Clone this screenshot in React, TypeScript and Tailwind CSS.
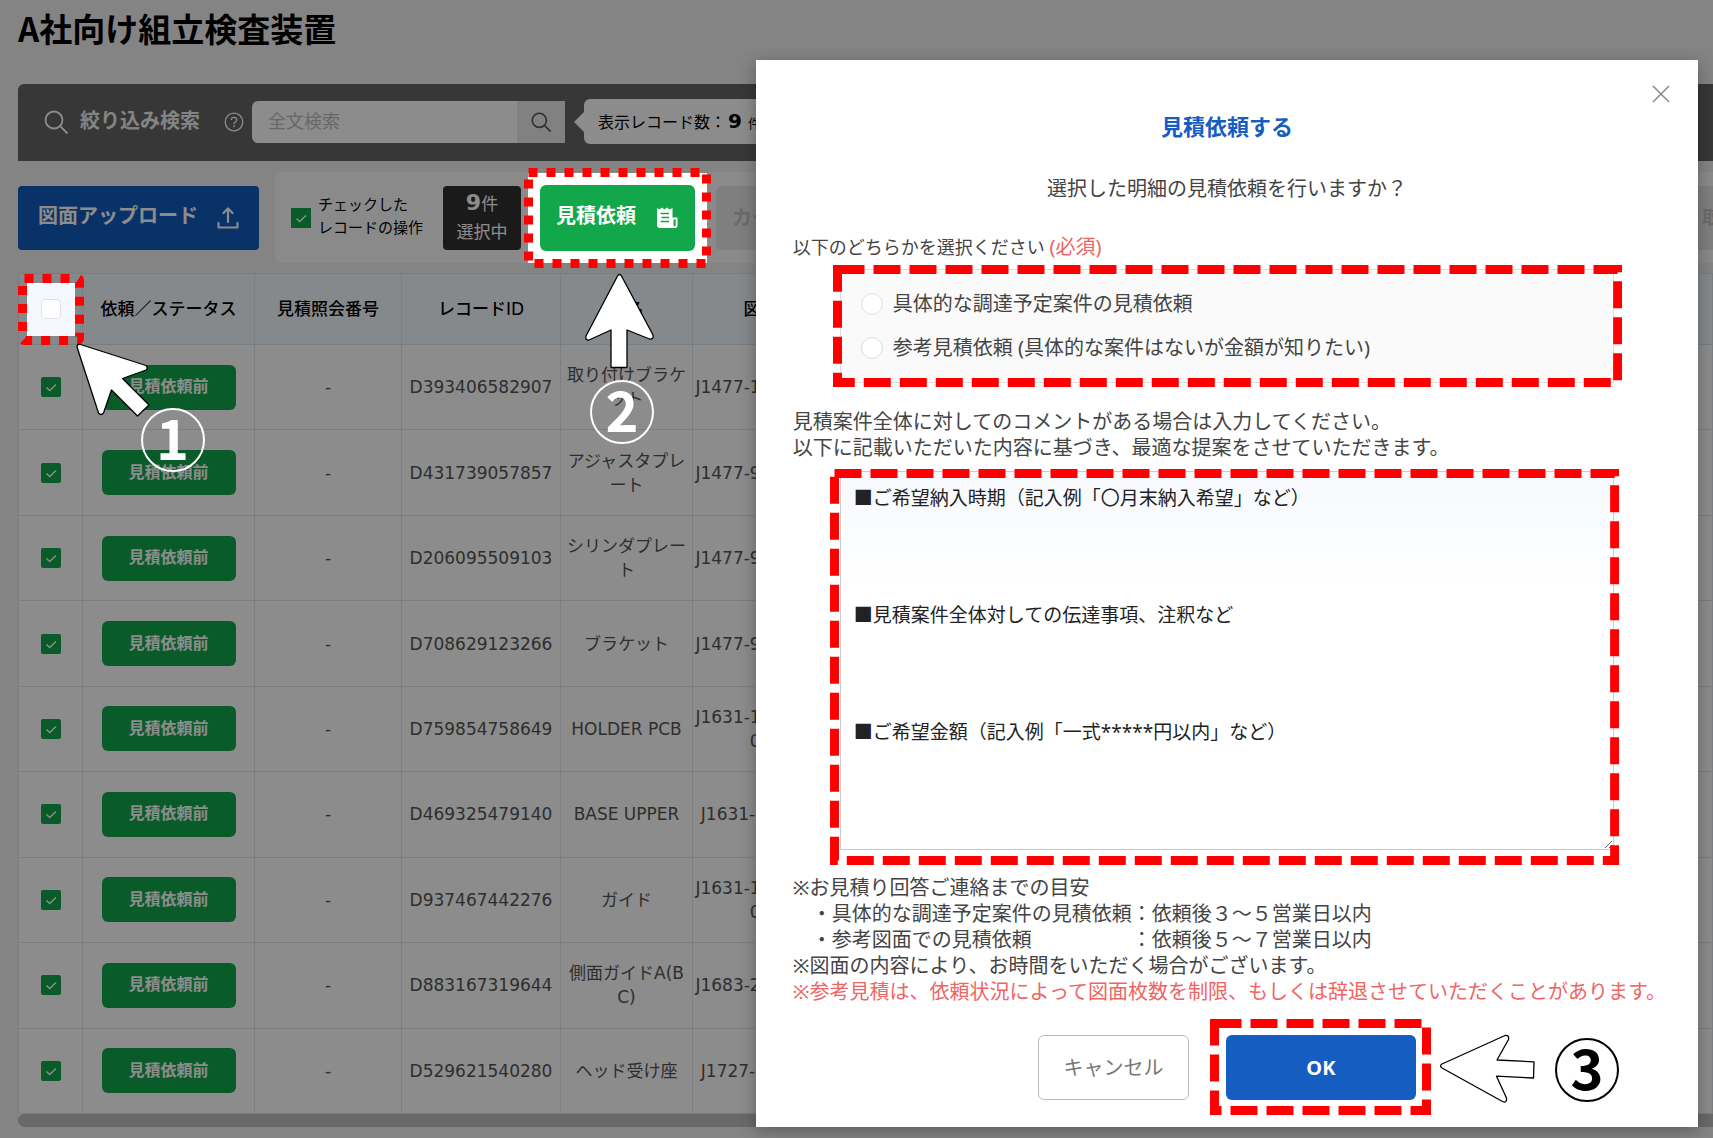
import type { ReactNode } from 'react';
import clsx from 'clsx';

type RecordRow = {
  id: string;
  name: string;
  drawing: string[];
};

const records: RecordRow[] = [
  { id: 'D393406582907', name: '取り付けブラケット', drawing: ['J1477-1002001'] },
  { id: 'D431739057857', name: 'アジャスタプレート', drawing: ['J1477-9001001'] },
  { id: 'D206095509103', name: 'シリンダプレート', drawing: ['J1477-9002001'] },
  { id: 'D708629123266', name: 'ブラケット', drawing: ['J1477-9003001'] },
  { id: 'D759854758649', name: 'HOLDER PCB', drawing: ['J1631-1001001', '01'] },
  { id: 'D469325479140', name: 'BASE UPPER', drawing: ['J1631-100100'] },
  { id: 'D937467442276', name: 'ガイド', drawing: ['J1631-1002001', '01'] },
  { id: 'D883167319644', name: '側面ガイドA(BC)', drawing: ['J1683-2001001'] },
  { id: 'D529621540280', name: 'ヘッド受け座', drawing: ['J1727-100100'] },
];

const defaultComment = [
  '■ご希望納入時期（記入例「〇月末納入希望」など）',
  '',
  '',
  '■見積案件全体対しての伝達事項、注釈など',
  '',
  '',
  '■ご希望金額（記入例「一式*****円以内」など）',
].join('\n');

function SearchIcon({ className, strokeWidth = 2 }: { className?: string; strokeWidth?: number }) {
  return (
    <svg className={className} viewBox="0 0 24 24" fill="none" stroke="currentColor" strokeWidth={strokeWidth} strokeLinecap="round">
      <circle cx="10" cy="10" r="8.5" />
      <path d="M16.2 16.2L23 23" />
    </svg>
  );
}

function UploadIcon() {
  return (
    <svg className="w-[22px] h-[22px]" viewBox="0 0 22 22" fill="none" stroke="currentColor" strokeWidth={2.2} strokeLinecap="round" strokeLinejoin="round">
      <path d="M11 15V2M6.500 6L11 1.500L15.500 6" />
      <path d="M1.500 16V20.500H20.500V16" />
    </svg>
  );
}

function EstimateIcon() {
  return (
    <svg className="w-[22px] h-[22px]" viewBox="0 0 22 22" fill="none">
      <path d="M1 1L3.500 2.500L6 0.500L8.500 2.500L11 0.500L13.500 2.500L16.500 1V10.500H21.500V18.500Q21.500 21 19 21H4Q1 21 1 18Z" fill="white" />
      <path d="M4.500 6.500H13M5.500 10.500H13M4.500 14.500H13" stroke="#12a74b" strokeWidth={1.7} />
      <path d="M17.500 12.500H19.700V18Q19.700 19.300 18.600 19.300Q17.500 19.300 17.500 18Z" fill="#12a74b" />
    </svg>
  );
}

function TickBox({ label, rounded }: { label: string; rounded?: boolean }) {
  return (
    <span className="relative inline-flex w-5 h-5 shrink-0">
      <input
        type="checkbox"
        defaultChecked
        aria-label={label}
        className={clsx('appearance-none w-5 h-5 bg-[#12a74b]', rounded && 'rounded-xs')}
      />
      <svg className="absolute inset-0 w-5 h-5 pointer-events-none" viewBox="0 0 20 20" fill="none" stroke="white" strokeWidth={1.5}>
        <path d="M5.5 10.5L8.7 13.5L15 7.5" />
      </svg>
    </span>
  );
}

// Red dashed frame. The parent decides how far it reaches beyond its target.
function DashedFrame({ className, dash, radius = 0 }: { className: string; dash: string; radius?: number }) {
  return (
    <div className={clsx('absolute pointer-events-none', className)}>
      <svg className="block w-full h-full" fill="none">
        <rect
          x="4.5"
          y="4.5"
          rx={radius}
          className="w-[calc(100%-9px)] h-[calc(100%-9px)]"
          stroke="#ff0000"
          strokeWidth={9}
          strokeDasharray={dash}
        />
      </svg>
    </div>
  );
}

function StepNumber({ className, children }: { className: string; children: ReactNode }) {
  return (
    <span
      className={clsx(
        'absolute flex items-center justify-center w-16 h-16 pb-2 rounded-full border-2 text-[56px] leading-none font-bold font-["Noto_Sans_CJK_JP",sans-serif] pointer-events-none',
        className,
      )}
    >
      {children}
    </span>
  );
}

function Arrow({ className, viewBox, d }: { className: string; viewBox: string; d: string }) {
  return (
    <svg className={clsx('absolute pointer-events-none', className)} viewBox={viewBox} fill="white" stroke="black" strokeWidth={1.3} strokeLinejoin="round">
      <path d={d} />
    </svg>
  );
}

function SearchBar() {
  return (
    <div className="flex items-center h-[77px] pl-[26px] pb-[2px] bg-[#646464] rounded-tl-md text-white">
      <SearchIcon className="w-6 h-6" strokeWidth={1.8} />
      <span className="ml-3 pb-[2px] text-[20px] font-bold text-[#f0f0f0]">絞り込み検索</span>
      <svg className="ml-6 w-5 h-5" viewBox="0 0 20 20" fill="none" stroke="currentColor" strokeWidth={1.3}>
        <circle cx="10" cy="10" r="8.8" />
        <path d="M7.3 8Q7.3 5.3 10 5.3Q12.7 5.3 12.7 7.7Q12.7 9 11.2 10Q10 10.8 10 12.2" />
        <path d="M10 13.6V15" strokeWidth={1.6} />
      </svg>
      <div className="ml-2 flex h-[42px]">
        <input
          type="text"
          aria-label="全文検索"
          placeholder="全文検索"
          className="w-[265px] pl-4 text-[18px] bg-white rounded-l-md placeholder:text-[#bdbdbd]"
        />
        <button type="button" aria-label="検索" className="flex items-center justify-center w-12 bg-[#ebebeb] text-[#5a5a5a]">
          <SearchIcon className="w-5 h-5" strokeWidth={2} />
        </button>
      </div>
      <svg className="ml-[9px] w-[10px] h-6" viewBox="0 0 10 24" fill="white">
        <path d="M0 12L10 2V22Z" />
      </svg>
      <div className="flex items-baseline h-[45px] w-60 pl-[14px] bg-white rounded-md text-[16px] leading-[45px] text-black">
        表示レコード数：
        <span className="ml-[2px] text-[20px] font-bold font-['DejaVu_Sans',sans-serif]">9</span>
        <span className="ml-[6px] text-[13px]">件</span>
      </div>
    </div>
  );
}

function Toolbar() {
  return (
    <div className="flex items-center gap-4 mt-[11px]">
      <button type="button" className="flex items-center justify-between w-[241px] h-16 shrink-0 px-5 bg-[#125bbd] rounded-sm text-white text-[20px] font-bold">
        <span className="pb-1">図面アップロード</span>
        <UploadIcon />
      </button>
      <div className="flex flex-1 items-center h-[91px] pl-4 bg-[#fcfcfc] rounded-l-lg">
        <TickBox label="チェックしたレコードの操作" />
        <p className="ml-[7px] w-[106px] pb-[2px] text-[15px] leading-[23px] text-black whitespace-nowrap">
          チェックした
          <br />
          レコードの操作
        </p>
        <div className="flex flex-col items-center justify-center w-[78px] h-16 ml-[19px] bg-[#313131] rounded-sm text-[17px] leading-[28px] text-white">
          <span>
            <b className="text-[22px] font-['DejaVu_Sans',sans-serif]">9</b>件
          </span>
          <span>選択中</span>
        </div>
        <div className="relative z-20 ml-[19px]">
          <div className="absolute -inset-3 bg-white" />
          <DashedFrame className="-inset-x-4 -inset-y-[17px]" dash="9 9" />
          <button type="button" className="relative flex items-center justify-between w-[155px] h-[66px] pl-4 pr-[17px] bg-[#12a74b] rounded-md text-white text-[20px] font-bold">
            <span className="pb-1">見積依頼</span>
            <EstimateIcon />
          </button>
          <Arrow
            className="top-[88px] left-[44px] w-[72px] h-[98px]"
            viewBox="0 0 72 98"
            d="M33.5 3Q35.500 0 37.500 3L69 62Q70 66.500 65.500 66L43 57V94.500H27V57L5 67Q1 67.500 2 63Z"
          />
          <StepNumber className="top-[195px] left-[50px] border-white text-white">2</StepNumber>
        </div>
        <button type="button" disabled className="w-40 h-16 ml-[21px] pl-4 text-left bg-[#e7e7e7] rounded-md text-[20px] font-bold text-[#c4c4c4]">
          カート
        </button>
        <button type="button" disabled className="w-[31px] h-16 ml-auto pl-5 overflow-hidden text-left whitespace-nowrap bg-[#e7e7e7] text-[18px] font-bold text-[#c4c4c4]">
          取消
        </button>
      </div>
    </div>
  );
}

function RecordTable() {
  return (
    <div className="flex-1 min-h-0 mt-[10px]">
      <table className="w-full h-full table-fixed border-collapse bg-white text-center text-[17px] leading-6 text-[#555] [&_td]:border [&_td]:border-[#e2e3e7] [&_th]:border [&_th]:border-[#e2e3e7]">
        <colgroup>
          <col className="w-16" />
          <col className="w-[172px]" />
          <col className="w-[147px]" />
          <col className="w-[159px]" />
          <col className="w-[132px]" />
          <col className="w-[136px]" />
          <col />
        </colgroup>
        <thead>
          <tr className="h-[71px] bg-[#f5f9fd] text-black [&>th]:font-medium">
            <th>
              <div className="relative z-20 flex items-center justify-center w-12 h-[53px] mx-auto bg-[#f5f9fd]">
                <input type="checkbox" aria-label="すべて選択" className="appearance-none w-5 h-5 bg-white border border-[#dfe3e8] rounded-sm" />
                <DashedFrame className="-inset-[9px]" dash="9 9" radius={2} />
                <Arrow
                  className="top-[60px] left-[48px] w-[78px] h-[78px]"
                  viewBox="0 0 78 78"
                  d="M2 4Q2 0.500 5.500 1.500L71 22.500Q73.500 25 71 27L47.500 35.500L74 62L62.500 73L36.500 47L28.500 70Q26 73 23.500 70Z"
                />
                <StepNumber className="top-[125px] left-[114px] border-white text-white">1</StepNumber>
              </div>
            </th>
            <th>依頼／ステータス</th>
            <th>見積照会番号</th>
            <th>レコードID</th>
            <th>品名</th>
            <th>図番</th>
            <th></th>
          </tr>
        </thead>
        <tbody>
          {records.map((record) => (
            <tr key={record.id}>
              <td>
                <div className="flex justify-center">
                  <TickBox label={record.id} rounded />
                </div>
              </td>
              <td className="py-4">
                <button type="button" className="block w-[134px] h-[45px] mx-auto bg-[#12a74b] rounded-md text-[16px] font-bold text-white">
                  見積依頼前
                </button>
              </td>
              <td>-</td>
              <td>{record.id}</td>
              <td className="px-[6px] break-all">{record.name}</td>
              <td className="whitespace-nowrap">
                {record.drawing.map((line) => (
                  <div key={line}>{line}</div>
                ))}
              </td>
              <td></td>
            </tr>
          ))}
        </tbody>
      </table>
    </div>
  );
}

function RadioOption({ label }: { label: string }) {
  return (
    <label className="flex items-center gap-[10px] h-11">
      <input type="radio" name="estimate-type" className="appearance-none w-[22px] h-[22px] bg-white border border-[#dcdcdc] rounded-full checked:border-[6px] checked:border-[#155dc0]" />
      {label}
    </label>
  );
}

function EstimateModal() {
  return (
    <div
      role="dialog"
      aria-labelledby="modal-title"
      className="absolute z-30 top-[60px] right-[15px] w-[55%] px-[37px] pt-[51px] pb-[27px] bg-white text-[20px] leading-[26px] text-[#444] shadow-[0_4px_16px_rgba(0,0,0,0.3)]"
    >
      <button type="button" aria-label="閉じる" className="absolute top-[24px] right-[27px] p-px text-[#888]">
        <svg className="w-[18px] h-[18px]" viewBox="0 0 18 18" stroke="currentColor" strokeWidth={1.5}>
          <path d="M1 1L17 17M17 1L1 17" />
        </svg>
      </button>

      <h2 id="modal-title" className="text-center text-[22px] leading-[30px] font-bold text-[#155dc0]">
        見積依頼する
      </h2>
      <p className="mt-[35px] text-center">選択した明細の見積依頼を行いますか？</p>

      <p className="mt-8 text-[18px]">
        以下のどちらかを選択ください <span className="text-[20px] text-[#f06464]">(必須)</span>
      </p>
      <div className="relative mt-[9px] mx-[47px] pl-5 py-3 bg-[#fafafa] border border-[#ddd]">
        <RadioOption label="具体的な調達予定案件の見積依頼" />
        <RadioOption label="参考見積依頼 (具体的な案件はないが金額が知りたい)" />
        <DashedFrame className="-left-2 -right-[9px] -inset-y-[5px]" dash="27 9" />
      </div>

      <label htmlFor="comment" className="block mt-[26px]">
        見積案件全体に対してのコメントがある場合は入力してください。
        <br />
        以下に記載いただいた内容に基づき、最適な提案をさせていただきます。
      </label>
      <div className="relative mt-[10px] mx-[47px]">
        <textarea
          id="comment"
          defaultValue={defaultComment}
          className="block w-full h-[379px] px-[13px] py-[7px] resize-y overflow-hidden border border-[#ccc] bg-linear-to-b from-[#f6f9fd] to-white to-30% text-[19px] leading-[39px] text-[#222]"
        />
        <DashedFrame className="-left-[10px] -right-[5px] -top-[2px] -bottom-[15px]" dash="27 9" />
      </div>

      <div className="mt-[25px] whitespace-nowrap">
        <p>※お見積り回答ご連絡までの目安</p>
        <p className="pl-[19px]">・具体的な調達予定案件の見積依頼：依頼後３～５営業日以内</p>
        <p className="pl-[19px]">・参考図面での見積依頼　　　　　：依頼後５～７営業日以内</p>
        <p>※図面の内容により、お時間をいただく場合がございます。</p>
        <p className="text-[#f06464]">※参考見積は、依頼状況によって図面枚数を制限、もしくは辞退させていただくことがあります。</p>
      </div>

      <div className="flex justify-center gap-[37px] mt-[30px]">
        <button type="button" className="w-[151px] h-[65px] border border-[#bbb] rounded-md text-[#777]">
          キャンセル
        </button>
        <div className="relative">
          <button type="button" className="w-[190px] h-[65px] bg-[#155dc0] rounded-md font-bold text-white">
            OK
          </button>
          <DashedFrame className="-left-4 -top-4 -right-[15px] -bottom-[15px]" dash="27 9" />
          <Arrow
            className="-top-[2px] left-[213px] w-[98px] h-[72px]"
            viewBox="0 0 98 72"
            d="M3 35Q0 33 3 31L66 2.500Q70.500 2 69.500 6.500L58 27L95 28.800L94.500 45L57.500 43.200L67.500 65Q68 70.500 63.500 68.500Z"
          />
          <StepNumber className="top-[3px] left-[329px] border-black text-black">3</StepNumber>
        </div>
      </div>
    </div>
  );
}

export default function App() {
  return (
    <div className="relative h-screen min-h-[1120px] overflow-hidden bg-[#f1f1f1] font-['DejaVu_Sans','Noto_Sans_CJK_JP',sans-serif]">
      <div className="flex flex-col h-full pl-[18px] pt-[4px] pb-[11px]">
        <h1 className="mb-8 text-[33px] leading-[48px] font-bold font-['Noto_Sans_CJK_JP',sans-serif] text-black">A社向け組立検査装置</h1>
        <SearchBar />
        <Toolbar />
        <RecordTable />
        <div className="h-[13px] bg-[#bfbfbf] rounded-l-full" />
      </div>
      <div className="absolute inset-0 z-10 bg-black/45" />
      <div className="font-['Noto_Sans','Noto_Sans_CJK_JP',sans-serif]">
        <EstimateModal />
      </div>
    </div>
  );
}
